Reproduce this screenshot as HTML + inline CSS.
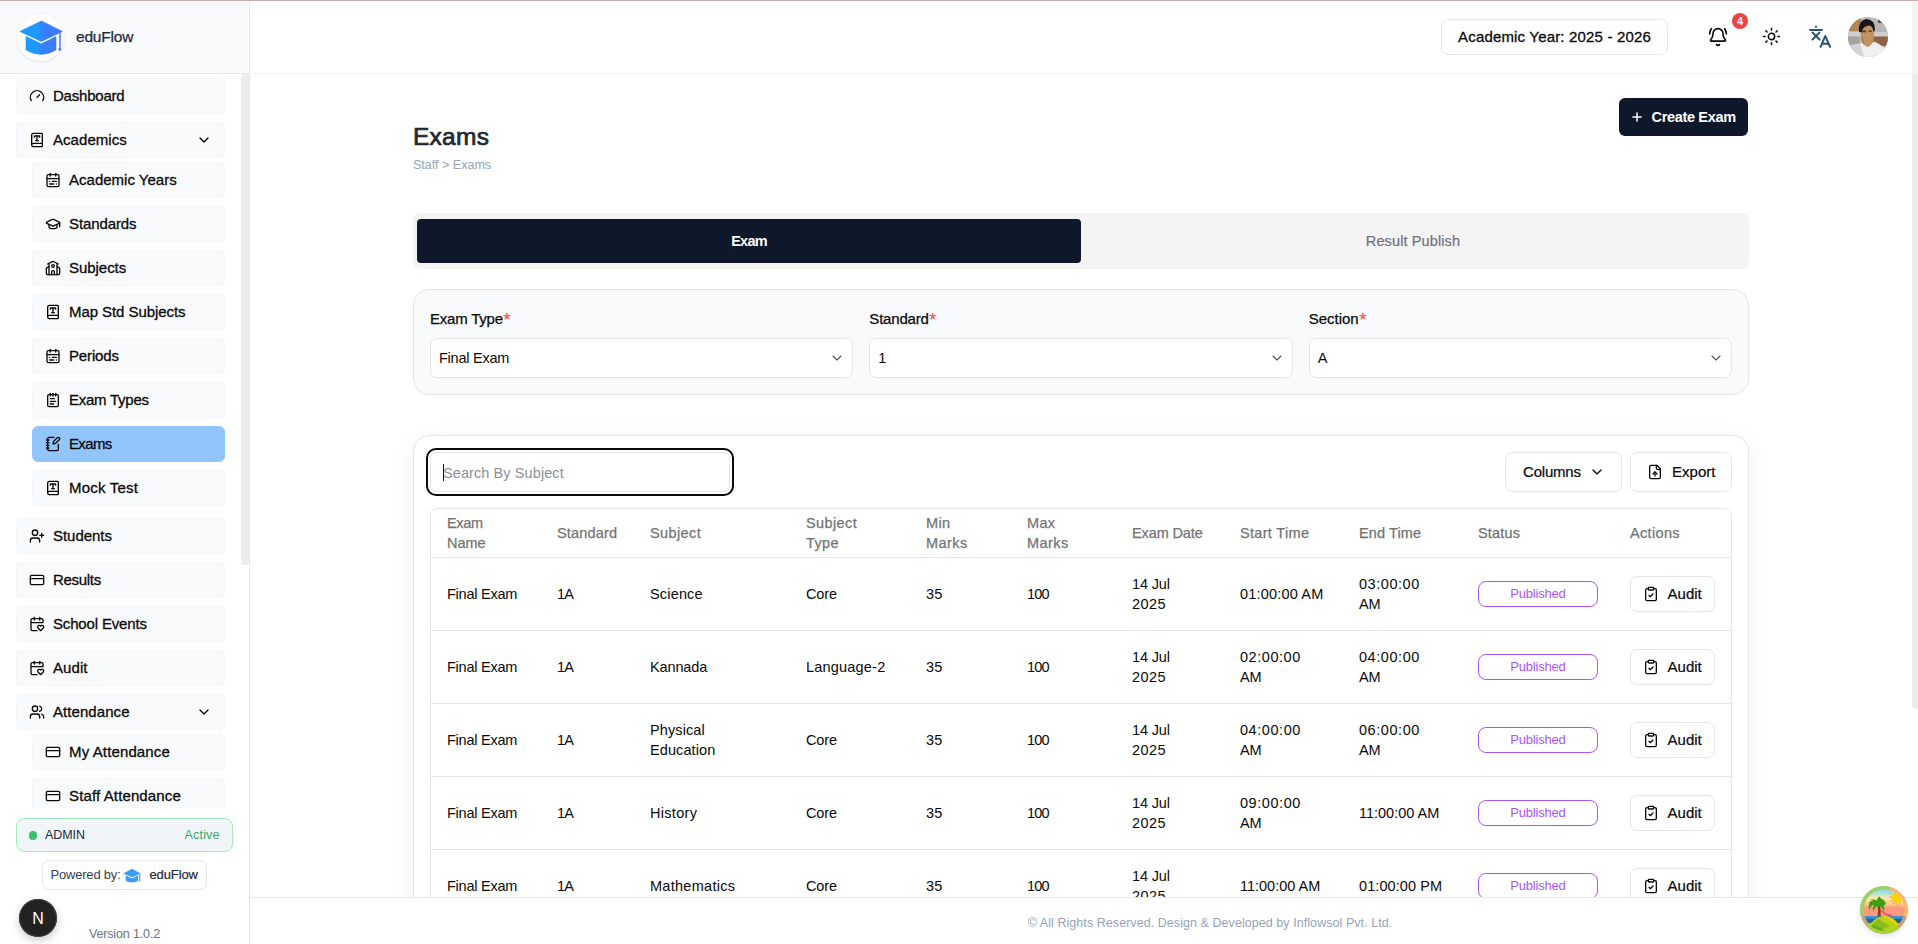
<!DOCTYPE html><html lang="en"><head><meta charset="utf-8"><title>eduFlow - Exams</title><style>
*{box-sizing:border-box;margin:0;padding:0}
button,input{font:inherit;color:inherit;border:0;background:none;text-align:left;outline:0;display:block}
a{text-decoration:none}
i{display:block}
html,body{width:1918px;height:944px;overflow:hidden;background:#fff}
body{font-family:"Liberation Sans",sans-serif;color:#0f172a;position:relative;font-size:15px}
.abs{position:absolute}
#topline{left:0;top:0;width:1918px;height:1px;background:#c6adb0;z-index:50}
#side{left:0;top:0;width:250px;height:944px;background:#fff;border-right:1px solid #e5e7eb}
#sidehead{left:0;top:0;width:249px;height:74px;background:#f8fafc;border-bottom:1px solid #e7e7e9}
#logo{left:17px;top:14px;width:46.500px;height:46.500px;border-radius:50%;background:#fff;box-shadow:0 1px 3px rgba(0,0,0,.10)}
#brand{left:76px;top:27px;font-size:15.5px;line-height:20px;color:#1e293b;-webkit-text-stroke:.25px #1e293b}
.nav{position:absolute;height:36px;border-radius:6px;background:#f8fafc;border:1px solid #f3f6f9;display:flex;align-items:center;padding-bottom:0;color:#0a0a0a;font-size:15px;-webkit-text-stroke:.3px #0a0a0a;white-space:nowrap}
.nav.l1{left:16px;width:209px;padding-left:12px}
.nav.l2{left:32px;width:193px;padding-left:12px}
.nav .ic{margin-right:8px;flex:none;-webkit-text-stroke:0}
.nav .chev{position:absolute;margin:0;right:12px;top:9px}
.nav>span{position:relative;top:-1px}
.nav.act{background:#93c5fd;border-color:#93c5fd}
#sscroll{left:241px;top:74px;width:8px;height:491px;background:#ededed;border-radius:3px}
#admin{left:16px;top:818px;width:217px;height:34px;border:1px solid #a3ecbf;border-radius:8px;background:#f1f5f8;font-size:12.5px;color:#1e293b}
#admin .dot{left:11.500px;top:12px;width:8.500px;height:8.500px;border-radius:50%;background:#3fbf6b}
#admin .t{left:28px;top:9px;line-height:15px;white-space:nowrap}
#admin .a{left:167.500px;top:9px;line-height:15px;color:#3aa863;white-space:nowrap}
#powered{left:42px;top:860px;width:165px;height:30px;border:1px solid #e5e7eb;border-radius:7px;background:#fff;font-size:13px;color:#374151}
#nextn{left:19px;top:899px;width:38px;height:38px;border-radius:50%;background:#222;box-shadow:0 0 0 1px #444 inset, 0 4px 10px rgba(0,0,0,.2);color:#fff;font-size:16px;text-align:center;line-height:40px}
#ver{left:0;top:927px;width:249px;text-align:center;font-size:12.5px;color:#6b7280;line-height:15px}
#head{left:250px;top:1px;width:1668px;height:73px;background:#fff;border-bottom:1px solid #f4f4f5}
#ay{left:1441px;top:19px;width:227px;height:36px;border:1px solid #e5e5e5;border-radius:7px;background:#fff;text-align:center;line-height:34px;font-size:15px;color:#0a0a0a;-webkit-text-stroke:.3px #0a0a0a;white-space:nowrap}
#badge{left:1732px;top:13px;width:16px;height:16px;border-radius:50%;background:#ef4444;color:#fff;font-size:11px;font-weight:bold;text-align:center;line-height:16px}
#avatar{left:1848px;top:17px;width:40px;height:40px;border-radius:50%;overflow:hidden;background:#d9d9d9}
#mscroll{left:1912px;top:74px;width:6px;height:635px;background:#ececec;border-radius:0 0 3px 3px}
#mscrolltop{left:1912px;top:1px;width:6px;height:73px;background:#f4f4f4}
h1{position:absolute;left:413px;top:121px;font-size:24.5px;line-height:32px;font-weight:normal;color:#22272e;-webkit-text-stroke:.7px #22272e;white-space:nowrap}
#crumb{left:413px;top:157px;font-size:12.5px;line-height:16px;color:#94a3b8}
#create{left:1619px;top:98px;width:129px;height:38px;border-radius:6px;background:#0f172a;color:#fff;font-size:14.5px;font-weight:bold;line-height:38px}
#tabs{left:413px;top:213px;width:1336px;height:56px;border-radius:7px;background:#f4f4f5}
#tab1{left:4px;top:6px;width:664px;height:44px;border-radius:4px;background:#0f172a;color:#fff;font-weight:bold;font-size:14.5px;text-align:center;line-height:44px}
#tab2{left:668px;top:6px;width:664px;height:44px;color:#71717a;font-size:14.5px;text-align:center;line-height:44px;-webkit-text-stroke:.2px #71717a;white-space:nowrap}
#filt{left:413px;top:289px;width:1336px;height:106px;border:1px solid #e5e5e5;border-radius:16px;background:#f9fafb}
.lbl{position:absolute;top:19px;font-size:15px;line-height:20px;color:#0a0a0a;-webkit-text-stroke:.25px #0a0a0a;white-space:nowrap}
.lbl b{color:#ef4444;font-weight:normal;-webkit-text-stroke:0;font-size:19px;line-height:10px;position:relative;top:1.500px;left:.5px}
.sel{position:absolute;top:48px;width:423.330px;height:40px;border:1px solid #e5e5e5;border-radius:7px;background:#fff;font-size:14.5px;line-height:38px;padding-left:8px;color:#0a0a0a}
.sel svg{position:absolute;right:7px;top:11px;color:#525252}
#card{left:413px;top:435px;width:1336px;height:520px;border:1px solid #e5e5e5;border-radius:16px;background:#fff;box-shadow:0 4px 24px rgba(0,0,0,.055)}
#ring{left:426px;top:448px;width:308px;height:48px;border-radius:10px;border:2px solid #0a0a0a;background:#fff}
#search{left:430px;top:452px;width:300px;height:40px;border:1px solid #e5e5e5;border-radius:7px;background:#fff;font-size:14.5px;color:#0a0a0a;padding:2px 0 0 12px}
#search::placeholder{color:#8b9099;opacity:1}
#caret{left:443px;top:464px;width:1px;height:17px;background:#111}
.btn{position:absolute;height:40px;border:1px solid #e5e5e5;border-radius:7px;background:#fff;font-size:15px;line-height:38px;color:#0a0a0a;-webkit-text-stroke:.22px #0a0a0a;white-space:nowrap}
#tbl{left:430px;top:508px;width:1302px;height:440px;border:1px solid #e5e5e5;border-radius:7px;background:#fff;overflow:hidden}
#tbl table{border-collapse:separate;border-spacing:0;table-layout:fixed;width:1300px}
#tbl th{height:48px;padding:0 16px;text-align:left;vertical-align:middle;font-weight:normal;font-size:14.5px;line-height:20px;color:#737373;-webkit-text-stroke:.25px #737373;white-space:nowrap}
#tbl td{height:73px;padding:0 16px;border-top:1px solid #e5e5e5;vertical-align:middle;font-size:14.5px;line-height:20px;color:#0a0a0a;white-space:nowrap}
.pub{display:block;width:120px;height:26px;border:1.5px solid #a855f7;border-radius:8px;color:#a855f7;font-size:13px;line-height:23px;text-align:center}
.aud{position:relative;width:85px;height:36px;border:1px solid #e5e5e5;border-radius:7px;font-size:15px;line-height:34px;color:#0a0a0a;-webkit-text-stroke:.22px #0a0a0a}
.aud svg{position:absolute;left:12px;top:9px;-webkit-text-stroke:0}
.aud>span{position:absolute;left:36.500px;top:0;white-space:nowrap}
#foot{left:250px;top:897px;width:1668px;height:47px;background:#fff;border-top:1px solid #e2e8f0;z-index:20}
#foot div{position:absolute;left:677px;top:16.500px;width:566px;text-align:center;white-space:nowrap;font-size:12.5px;line-height:16px;color:#94a3b8;letter-spacing:.1px}
#island{left:1860px;top:886px;width:48px;height:48px;border-radius:50%;z-index:30;overflow:hidden;box-shadow:0 2px 5px rgba(0,0,0,.12)}
</style></head><body>
<aside id="side" class="abs">
<nav id="navwrap" class="abs" style="left:0;top:74px;width:249px;height:735px;overflow:hidden"><div class="abs" style="left:0;top:-74px;width:249px;height:900px">
<a class="nav l1" style="top:78px"><svg class="ic" width="16" height="16" viewBox="0 0 24 24" fill="none" stroke="currentColor" stroke-width="2" stroke-linecap="round" stroke-linejoin="round" style=""><path d="m12 14 4-4"/><path d="M3.34 19a10 10 0 1 1 17.32 0"/></svg><span style="letter-spacing:-0.21px">Dashboard</span></a>
<a class="nav l1" style="top:122px"><svg class="ic" width="16" height="16" viewBox="0 0 24 24" fill="none" stroke="currentColor" stroke-width="2" stroke-linecap="round" stroke-linejoin="round" style=""><path d="M10 13h4"/><path d="M12 6v7"/><path d="M16 8V6H8v2"/><path d="M4 19.5v-15A2.5 2.5 0 0 1 6.5 2H19a1 1 0 0 1 1 1v18a1 1 0 0 1-1 1H6.5a1 1 0 0 1 0-5H20"/></svg><span style="letter-spacing:0.05px">Academics</span><svg class="ic chev" width="16" height="16" viewBox="0 0 24 24" fill="none" stroke="currentColor" stroke-width="2" stroke-linecap="round" stroke-linejoin="round" style=""><path d="m6 9 6 6 6-6"/></svg></a>
<a class="nav l2" style="top:162px"><svg class="ic" width="16" height="16" viewBox="0 0 24 24" fill="none" stroke="currentColor" stroke-width="2" stroke-linecap="round" stroke-linejoin="round" style=""><rect width="18" height="18" x="3" y="4" rx="2"/><path d="M16 2v4"/><path d="M3 10h18"/><path d="M8 2v4"/><path d="M17 14h-6"/><path d="M13 18H7"/><path d="M7 14h.01"/><path d="M17 18h.01"/></svg><span style="letter-spacing:0.01px">Academic Years</span></a>
<a class="nav l2" style="top:206px"><svg class="ic" width="16" height="16" viewBox="0 0 24 24" fill="none" stroke="currentColor" stroke-width="2" stroke-linecap="round" stroke-linejoin="round" style=""><path d="M21.42 10.922a1 1 0 0 0-.019-1.838L12.83 5.18a2 2 0 0 0-1.66 0L2.6 9.08a1 1 0 0 0 0 1.832l8.57 3.908a2 2 0 0 0 1.66 0z"/><path d="M22 10v6"/><path d="M6 12.5V16a6 3 0 0 0 12 0v-3.5"/></svg><span style="letter-spacing:-0.11px">Standards</span></a>
<a class="nav l2" style="top:250px"><svg class="ic" width="16" height="16" viewBox="0 0 24 24" fill="none" stroke="currentColor" stroke-width="2" stroke-linecap="round" stroke-linejoin="round" style=""><path d="M14 22v-4a2 2 0 1 0-4 0v4"/><path d="m18 10 3.447 1.724a1 1 0 0 1 .553.894V20a2 2 0 0 1-2 2H4a2 2 0 0 1-2-2v-7.382a1 1 0 0 1 .553-.894L6 10"/><path d="M18 5v17"/><path d="m4 6 7.106-3.553a2 2 0 0 1 1.788 0L20 6"/><path d="M6 5v17"/><circle cx="12" cy="9" r="2"/></svg><span style="letter-spacing:-0.04px">Subjects</span></a>
<a class="nav l2" style="top:294px"><svg class="ic" width="16" height="16" viewBox="0 0 24 24" fill="none" stroke="currentColor" stroke-width="2" stroke-linecap="round" stroke-linejoin="round" style=""><path d="M10 13h4"/><path d="M12 6v7"/><path d="M16 8V6H8v2"/><path d="M4 19.5v-15A2.5 2.5 0 0 1 6.5 2H19a1 1 0 0 1 1 1v18a1 1 0 0 1-1 1H6.5a1 1 0 0 1 0-5H20"/></svg><span style="letter-spacing:-0.07px">Map Std Subjects</span></a>
<a class="nav l2" style="top:338px"><svg class="ic" width="16" height="16" viewBox="0 0 24 24" fill="none" stroke="currentColor" stroke-width="2" stroke-linecap="round" stroke-linejoin="round" style=""><rect width="18" height="18" x="3" y="4" rx="2"/><path d="M16 2v4"/><path d="M3 10h18"/><path d="M8 2v4"/><path d="M17 14h-6"/><path d="M13 18H7"/><path d="M7 14h.01"/><path d="M17 18h.01"/></svg><span style="letter-spacing:-0.14px">Periods</span></a>
<a class="nav l2" style="top:382px"><svg class="ic" width="16" height="16" viewBox="0 0 24 24" fill="none" stroke="currentColor" stroke-width="2" stroke-linecap="round" stroke-linejoin="round" style=""><path d="M8 2v4"/><path d="M12 2v4"/><path d="M16 2v4"/><rect width="16" height="18" x="4" y="4" rx="2"/><path d="M8 10h6"/><path d="M8 14h8"/><path d="M8 18h5"/></svg><span style="letter-spacing:-0.25px">Exam Types</span></a>
<a class="nav l2 act" style="top:426px"><svg class="ic" width="16" height="16" viewBox="0 0 24 24" fill="none" stroke="currentColor" stroke-width="2" stroke-linecap="round" stroke-linejoin="round" style=""><path d="M13.4 2H6a2 2 0 0 0-2 2v16a2 2 0 0 0 2 2h12a2 2 0 0 0 2-2v-7.4"/><path d="M2 6h4"/><path d="M2 10h4"/><path d="M2 14h4"/><path d="M2 18h4"/><path d="M21.378 5.626a1 1 0 1 0-3.004-3.004l-5.01 5.012a2 2 0 0 0-.506.854l-.837 2.87a.5.5 0 0 0 .62.62l2.87-.837a2 2 0 0 0 .854-.506z"/></svg><span style="letter-spacing:-0.65px">Exams</span></a>
<a class="nav l2" style="top:470px"><svg class="ic" width="16" height="16" viewBox="0 0 24 24" fill="none" stroke="currentColor" stroke-width="2" stroke-linecap="round" stroke-linejoin="round" style=""><path d="M10 13h4"/><path d="M12 6v7"/><path d="M16 8V6H8v2"/><path d="M4 19.5v-15A2.5 2.5 0 0 1 6.5 2H19a1 1 0 0 1 1 1v18a1 1 0 0 1-1 1H6.5a1 1 0 0 1 0-5H20"/></svg><span style="letter-spacing:0.22px">Mock Test</span></a>
<a class="nav l1" style="top:518px"><svg class="ic" width="16" height="16" viewBox="0 0 24 24" fill="none" stroke="currentColor" stroke-width="2" stroke-linecap="round" stroke-linejoin="round" style=""><path d="M16 21v-2a4 4 0 0 0-4-4H6a4 4 0 0 0-4 4v2"/><circle cx="9" cy="7" r="4"/><line x1="19" x2="19" y1="8" y2="14"/><line x1="22" x2="16" y1="11" y2="11"/></svg><span style="letter-spacing:-0.03px">Students</span></a>
<a class="nav l1" style="top:562px"><svg class="ic" width="16" height="16" viewBox="0 0 24 24" fill="none" stroke="currentColor" stroke-width="2" stroke-linecap="round" stroke-linejoin="round" style=""><rect width="20" height="14" x="2" y="5" rx="2"/><line x1="2" x2="22" y1="10" y2="10"/></svg><span style="letter-spacing:-0.30px">Results</span></a>
<a class="nav l1" style="top:606px"><svg class="ic" width="16" height="16" viewBox="0 0 24 24" fill="none" stroke="currentColor" stroke-width="2" stroke-linecap="round" stroke-linejoin="round" style=""><path d="M3 10h18V6a2 2 0 0 0-2-2H5a2 2 0 0 0-2 2v14a2 2 0 0 0 2 2h7"/><path d="M8 2v4"/><path d="M16 2v4"/><path d="M21.29 14.7a2.43 2.43 0 0 0-2.65-.52c-.3.12-.57.3-.8.53l-.34.34-.35-.34a2.43 2.43 0 0 0-2.65-.53c-.3.12-.56.3-.79.53-.95.94-1 2.53.2 3.74L17.5 22l3.6-3.55c1.2-1.21 1.14-2.8.19-3.74Z"/></svg><span style="letter-spacing:-0.16px">School Events</span></a>
<a class="nav l1" style="top:650px"><svg class="ic" width="16" height="16" viewBox="0 0 24 24" fill="none" stroke="currentColor" stroke-width="2" stroke-linecap="round" stroke-linejoin="round" style=""><path d="M3 10h18V6a2 2 0 0 0-2-2H5a2 2 0 0 0-2 2v14a2 2 0 0 0 2 2h7"/><path d="M8 2v4"/><path d="M16 2v4"/><path d="M21.29 14.7a2.43 2.43 0 0 0-2.65-.52c-.3.12-.57.3-.8.53l-.34.34-.35-.34a2.43 2.43 0 0 0-2.65-.53c-.3.12-.56.3-.79.53-.95.94-1 2.53.2 3.74L17.5 22l3.6-3.55c1.2-1.21 1.14-2.8.19-3.74Z"/></svg><span style="letter-spacing:0.07px">Audit</span></a>
<a class="nav l1" style="top:694px"><svg class="ic" width="16" height="16" viewBox="0 0 24 24" fill="none" stroke="currentColor" stroke-width="2" stroke-linecap="round" stroke-linejoin="round" style=""><path d="M16 21v-2a4 4 0 0 0-4-4H6a4 4 0 0 0-4 4v2"/><circle cx="9" cy="7" r="4"/><path d="M22 21v-2a4 4 0 0 0-3-3.87"/><path d="M16 3.13a4 4 0 0 1 0 7.75"/></svg><span style="letter-spacing:0.07px">Attendance</span><svg class="ic chev" width="16" height="16" viewBox="0 0 24 24" fill="none" stroke="currentColor" stroke-width="2" stroke-linecap="round" stroke-linejoin="round" style=""><path d="m6 9 6 6 6-6"/></svg></a>
<a class="nav l2" style="top:734px"><svg class="ic" width="16" height="16" viewBox="0 0 24 24" fill="none" stroke="currentColor" stroke-width="2" stroke-linecap="round" stroke-linejoin="round" style=""><rect width="20" height="14" x="2" y="5" rx="2"/><line x1="2" x2="22" y1="10" y2="10"/></svg><span style="letter-spacing:0.13px">My Attendance</span></a>
<a class="nav l2" style="top:778px"><svg class="ic" width="16" height="16" viewBox="0 0 24 24" fill="none" stroke="currentColor" stroke-width="2" stroke-linecap="round" stroke-linejoin="round" style=""><rect width="20" height="14" x="2" y="5" rx="2"/><line x1="2" x2="22" y1="10" y2="10"/></svg><span style="letter-spacing:0.13px">Staff Attendance</span></a>
</div></nav>
<div id="sscroll" class="abs"></div>
<div id="sidehead" class="abs"><div id="logo" class="abs"><svg class="abs" style="left:0;top:0;overflow:visible" width="46" height="46" viewBox="0 0 46 46"><defs><linearGradient id="lg1" x1="0" y1="0" x2="1" y2="0"><stop offset="0" stop-color="#1e9bff"/><stop offset=".4" stop-color="#2196ff"/><stop offset=".6" stop-color="#3a7dff"/><stop offset="1" stop-color="#3d7aff"/></linearGradient></defs><path d="M24.400 7.100 L45.300 17.400 L24.400 27.400 L2.900 17.400 Z" fill="url(#lg1)" stroke="url(#lg1)" stroke-width=".8" stroke-linejoin="round"/><path d="M9 22.500 L24.400 29.700 L39 22.600 V36 Q24.400 44.800 9 36 Z" fill="url(#lg1)" stroke="url(#lg1)" stroke-width=".6" stroke-linejoin="round"/><path d="M43 19 V33.500" stroke="#3d7aff" stroke-width="1.500" fill="none"/><path d="M43 33 l1.500 2.200 l-2 2.300 l-1.300 -2.300z" fill="#3d7aff"/></svg></div><div id="brand" class="abs"><span style="letter-spacing:-0.20px">eduFlow</span></div></div>
<div id="admin" class="abs"><i class="dot abs"></i><div class="t abs"><span style="letter-spacing:-0.07px">ADMIN</span></div><div class="a abs"><span style="letter-spacing:0.19px">Active</span></div></div>
<div id="powered" class="abs"><span class="abs" style="left:7.500px;top:6px;line-height:15px;white-space:nowrap"><span style="letter-spacing:-0.20px">Powered by:</span></span><svg class="abs" style="left:78.500px;top:5.500px" width="19" height="17" viewBox="0 0 46 46" preserveAspectRatio="none"><path d="M24.400 5 L45.300 17.400 L24.400 28 L2.900 17.400 Z" fill="#3b9cf5"/><path d="M9 22.500 L24.400 31 L39 22.600 V38 Q24.400 46 9 38 Z" fill="#3b9cf5"/><path d="M43 19 V40" stroke="#4b8cf0" stroke-width="2.500" fill="none"/></svg><span class="abs" style="left:106.500px;top:6px;line-height:15px;color:#1e293b;-webkit-text-stroke:.2px #1e293b"><span style="letter-spacing:-0.11px">eduFlow</span></span></div>
<div id="nextn" class="abs">N</div>
<div id="ver" class="abs"><span style="letter-spacing:-0.14px">Version 1.0.2</span></div>
</aside>
<main>
<h1><span style="letter-spacing:0.25px">Exams</span></h1><div id="crumb" class="abs"><span style="letter-spacing:0.01px">Staff &gt; Exams</span></div>
<button id="create" class="abs"><svg class="abs" width="14" height="14" viewBox="0 0 24 24" fill="none" stroke="currentColor" stroke-width="2.5" stroke-linecap="round" stroke-linejoin="round" style="left:11px;top:12px;position:absolute"><path d="M5 12h14"/><path d="M12 5v14"/></svg><span class="abs" style="left:32.500px;top:0;white-space:nowrap"><span style="letter-spacing:-0.33px">Create Exam</span></span></button>
<div id="tabs" class="abs" role="tablist"><button id="tab1" class="abs" role="tab"><span style="letter-spacing:-0.80px">Exam</span></button><button id="tab2" class="abs" role="tab"><span style="letter-spacing:0.12px">Result Publish</span></button></div>
<section id="filt" class="abs">
<label class="lbl" style="left:16px"><span style="letter-spacing:-0.22px">Exam Type</span><b>*</b></label><button class="sel" role="combobox" style="left:16px"><span style="letter-spacing:-0.24px">Final Exam</span><svg class="ic" width="16" height="16" viewBox="0 0 24 24" fill="none" stroke="currentColor" stroke-width="1.6" stroke-linecap="round" stroke-linejoin="round" style=""><path d="m6 9 6 6 6-6"/></svg></button>
<label class="lbl" style="left:455.33px"><span style="letter-spacing:-0.20px">Standard</span><b>*</b></label><button class="sel" role="combobox" style="left:455.33px">1<svg class="ic" width="16" height="16" viewBox="0 0 24 24" fill="none" stroke="currentColor" stroke-width="1.6" stroke-linecap="round" stroke-linejoin="round" style=""><path d="m6 9 6 6 6-6"/></svg></button>
<label class="lbl" style="left:894.67px"><span style="letter-spacing:-0.01px">Section</span><b>*</b></label><button class="sel" role="combobox" style="left:894.67px">A<svg class="ic" width="16" height="16" viewBox="0 0 24 24" fill="none" stroke="currentColor" stroke-width="1.6" stroke-linecap="round" stroke-linejoin="round" style=""><path d="m6 9 6 6 6-6"/></svg></button>
</section>
<section id="card" class="abs"></section>
<div id="ring" class="abs"></div><input id="search" class="abs" type="text" placeholder="Search By Subject" style="letter-spacing:0.09px"><div id="caret" class="abs"></div>
<button class="btn" style="left:1505px;top:452px;width:117px"><span class="abs" style="left:17px;top:0"><span style="letter-spacing:-0.20px">Columns</span></span><svg class="abs" width="16" height="16" viewBox="0 0 24 24" fill="none" stroke="currentColor" stroke-width="2" stroke-linecap="round" stroke-linejoin="round" style="left:83px;top:11px;position:absolute"><path d="m6 9 6 6 6-6"/></svg></button>
<button class="btn" style="left:1630px;top:452px;width:102px"><svg class="abs" width="16" height="16" viewBox="0 0 24 24" fill="none" stroke="currentColor" stroke-width="2" stroke-linecap="round" stroke-linejoin="round" style="left:15.500px;top:11px;position:absolute"><path d="M15 2H6a2 2 0 0 0-2 2v16a2 2 0 0 0 2 2h12a2 2 0 0 0 2-2V7Z"/><path d="M14 2v4a2 2 0 0 0 2 2h4"/><path d="M12 12v6"/><path d="m15 15-3-3-3 3"/></svg><span class="abs" style="left:41px;top:0"><span style="letter-spacing:0.01px">Export</span></span></button>
<div id="tbl" class="abs"><table><colgroup><col style="width:110px"><col style="width:93px"><col style="width:156px"><col style="width:120px"><col style="width:101px"><col style="width:105px"><col style="width:108px"><col style="width:119px"><col style="width:119px"><col style="width:152px"><col style="width:117px"></colgroup><thead><tr>
<th><span style="letter-spacing:-0.33px">Exam</span><br><span style="letter-spacing:0.00px">Name</span></th>
<th><span style="letter-spacing:0.19px">Standard</span></th>
<th><span style="letter-spacing:0.39px">Subject</span></th>
<th><span style="letter-spacing:0.39px">Subject</span><br><span style="letter-spacing:0.35px">Type</span></th>
<th><span style="letter-spacing:0.36px">Min</span><br><span style="letter-spacing:0.43px">Marks</span></th>
<th><span style="letter-spacing:0.35px">Max</span><br><span style="letter-spacing:0.43px">Marks</span></th>
<th><span style="letter-spacing:-0.12px">Exam Date</span></th>
<th><span style="letter-spacing:0.32px">Start Time</span></th>
<th><span style="letter-spacing:0.11px">End Time</span></th>
<th><span style="letter-spacing:0.18px">Status</span></th>
<th><span style="letter-spacing:0.34px">Actions</span></th>
</tr></thead><tbody>
<tr>
<td><span style="letter-spacing:-0.24px">Final Exam</span></td>
<td><span style="letter-spacing:-0.80px">1A</span></td>
<td><span style="letter-spacing:0.17px">Science</span></td>
<td><span style="letter-spacing:-0.15px">Core</span></td>
<td><span style="letter-spacing:0.26px">35</span></td>
<td><span style="letter-spacing:-0.80px">100</span></td>
<td><span style="letter-spacing:-0.14px">14 Jul</span><br><span style="letter-spacing:0.44px">2025</span></td>
<td><span style="letter-spacing:0.18px">01:00:00 AM</span></td>
<td><span style="letter-spacing:0.54px">03:00:00</span><br><span style="letter-spacing:-0.25px">AM</span></td>
<td><span class="pub"><span style="letter-spacing:-0.20px">Published</span></span></td><td><button class="aud"><svg class="ic" width="16" height="16" viewBox="0 0 24 24" fill="none" stroke="currentColor" stroke-width="2" stroke-linecap="round" stroke-linejoin="round" style=""><rect width="8" height="4" x="8" y="2" rx="1" ry="1"/><path d="M16 4h2a2 2 0 0 1 2 2v14a2 2 0 0 1-2 2H6a2 2 0 0 1-2-2V6a2 2 0 0 1 2-2h2"/><path d="m9 14 2 2 4-4"/></svg><span><span style="letter-spacing:0.02px">Audit</span></span></button></td>
</tr>
<tr>
<td><span style="letter-spacing:-0.24px">Final Exam</span></td>
<td><span style="letter-spacing:-0.80px">1A</span></td>
<td><span style="letter-spacing:-0.13px">Kannada</span></td>
<td><span style="letter-spacing:0.20px">Language-2</span></td>
<td><span style="letter-spacing:0.26px">35</span></td>
<td><span style="letter-spacing:-0.80px">100</span></td>
<td><span style="letter-spacing:-0.14px">14 Jul</span><br><span style="letter-spacing:0.44px">2025</span></td>
<td><span style="letter-spacing:0.54px">02:00:00</span><br><span style="letter-spacing:-0.25px">AM</span></td>
<td><span style="letter-spacing:0.56px">04:00:00</span><br><span style="letter-spacing:-0.25px">AM</span></td>
<td><span class="pub"><span style="letter-spacing:-0.20px">Published</span></span></td><td><button class="aud"><svg class="ic" width="16" height="16" viewBox="0 0 24 24" fill="none" stroke="currentColor" stroke-width="2" stroke-linecap="round" stroke-linejoin="round" style=""><rect width="8" height="4" x="8" y="2" rx="1" ry="1"/><path d="M16 4h2a2 2 0 0 1 2 2v14a2 2 0 0 1-2 2H6a2 2 0 0 1-2-2V6a2 2 0 0 1 2-2h2"/><path d="m9 14 2 2 4-4"/></svg><span><span style="letter-spacing:0.02px">Audit</span></span></button></td>
</tr>
<tr>
<td><span style="letter-spacing:-0.24px">Final Exam</span></td>
<td><span style="letter-spacing:-0.80px">1A</span></td>
<td><span style="letter-spacing:0.10px">Physical</span><br><span style="letter-spacing:0.10px">Education</span></td>
<td><span style="letter-spacing:-0.15px">Core</span></td>
<td><span style="letter-spacing:0.26px">35</span></td>
<td><span style="letter-spacing:-0.80px">100</span></td>
<td><span style="letter-spacing:-0.14px">14 Jul</span><br><span style="letter-spacing:0.44px">2025</span></td>
<td><span style="letter-spacing:0.56px">04:00:00</span><br><span style="letter-spacing:-0.25px">AM</span></td>
<td><span style="letter-spacing:0.56px">06:00:00</span><br><span style="letter-spacing:-0.25px">AM</span></td>
<td><span class="pub"><span style="letter-spacing:-0.20px">Published</span></span></td><td><button class="aud"><svg class="ic" width="16" height="16" viewBox="0 0 24 24" fill="none" stroke="currentColor" stroke-width="2" stroke-linecap="round" stroke-linejoin="round" style=""><rect width="8" height="4" x="8" y="2" rx="1" ry="1"/><path d="M16 4h2a2 2 0 0 1 2 2v14a2 2 0 0 1-2 2H6a2 2 0 0 1-2-2V6a2 2 0 0 1 2-2h2"/><path d="m9 14 2 2 4-4"/></svg><span><span style="letter-spacing:0.02px">Audit</span></span></button></td>
</tr>
<tr>
<td><span style="letter-spacing:-0.24px">Final Exam</span></td>
<td><span style="letter-spacing:-0.80px">1A</span></td>
<td><span style="letter-spacing:0.31px">History</span></td>
<td><span style="letter-spacing:-0.15px">Core</span></td>
<td><span style="letter-spacing:0.26px">35</span></td>
<td><span style="letter-spacing:-0.80px">100</span></td>
<td><span style="letter-spacing:-0.14px">14 Jul</span><br><span style="letter-spacing:0.44px">2025</span></td>
<td><span style="letter-spacing:0.56px">09:00:00</span><br><span style="letter-spacing:-0.25px">AM</span></td>
<td><span style="letter-spacing:-0.01px">11:00:00 AM</span></td>
<td><span class="pub"><span style="letter-spacing:-0.20px">Published</span></span></td><td><button class="aud"><svg class="ic" width="16" height="16" viewBox="0 0 24 24" fill="none" stroke="currentColor" stroke-width="2" stroke-linecap="round" stroke-linejoin="round" style=""><rect width="8" height="4" x="8" y="2" rx="1" ry="1"/><path d="M16 4h2a2 2 0 0 1 2 2v14a2 2 0 0 1-2 2H6a2 2 0 0 1-2-2V6a2 2 0 0 1 2-2h2"/><path d="m9 14 2 2 4-4"/></svg><span><span style="letter-spacing:0.02px">Audit</span></span></button></td>
</tr>
<tr>
<td><span style="letter-spacing:-0.24px">Final Exam</span></td>
<td><span style="letter-spacing:-0.80px">1A</span></td>
<td><span style="letter-spacing:0.28px">Mathematics</span></td>
<td><span style="letter-spacing:-0.15px">Core</span></td>
<td><span style="letter-spacing:0.26px">35</span></td>
<td><span style="letter-spacing:-0.80px">100</span></td>
<td><span style="letter-spacing:-0.14px">14 Jul</span><br><span style="letter-spacing:0.44px">2025</span></td>
<td><span style="letter-spacing:-0.01px">11:00:00 AM</span></td>
<td><span style="letter-spacing:0.08px">01:00:00 PM</span></td>
<td><span class="pub"><span style="letter-spacing:-0.20px">Published</span></span></td><td><button class="aud"><svg class="ic" width="16" height="16" viewBox="0 0 24 24" fill="none" stroke="currentColor" stroke-width="2" stroke-linecap="round" stroke-linejoin="round" style=""><rect width="8" height="4" x="8" y="2" rx="1" ry="1"/><path d="M16 4h2a2 2 0 0 1 2 2v14a2 2 0 0 1-2 2H6a2 2 0 0 1-2-2V6a2 2 0 0 1 2-2h2"/><path d="m9 14 2 2 4-4"/></svg><span><span style="letter-spacing:0.02px">Audit</span></span></button></td>
</tr>
</tbody></table></div>
</main>
<header id="head" class="abs"></header>
<button id="ay" class="abs"><span style="letter-spacing:0.17px">Academic Year: 2025 - 2026</span></button>
<svg class="abs" width="20" height="20" viewBox="0 0 24 24" fill="none" stroke="currentColor" stroke-width="2" stroke-linecap="round" stroke-linejoin="round" style="left:1708px;top:27px;position:absolute;color:#0a0a0a"><path d="M10.268 21a2 2 0 0 0 3.464 0"/><path d="M22 8c0-2.3-.8-4.3-2-6"/><path d="M3.262 15.326A1 1 0 0 0 4 17h16a1 1 0 0 0 .74-1.673C19.41 13.956 18 12.499 18 8A6 6 0 0 0 6 8c0 4.499-1.411 5.956-2.738 7.326"/><path d="M4 2C2.800 3.700 2 5.700 2 8"/></svg>
<span id="badge" class="abs">4</span>
<svg class="abs" width="19" height="19" viewBox="0 0 24 24" fill="none" stroke="currentColor" stroke-width="1.9" stroke-linecap="round" stroke-linejoin="round" style="left:1762.300px;top:27.200px;position:absolute;color:#0a0a0a"><circle cx="12" cy="12" r="4"/><path d="M12 2v2"/><path d="M12 20v2"/><path d="m4.930 4.930 1.410 1.410"/><path d="m17.660 17.660 1.410 1.410"/><path d="M2 12h2"/><path d="M20 12h2"/><path d="m6.340 17.660-1.410 1.410"/><path d="m19.070 4.930-1.410 1.410"/></svg>
<svg class="abs" style="left:1808px;top:24px" width="24" height="26" viewBox="0 0 24 26" fill="none" stroke="#2a5570" stroke-width="1.900" stroke-linecap="round" stroke-linejoin="round"><path d="M2 6h12"/><path d="M8 2.500v.500"/><path d="M4.500 8.500l7 7"/><path d="M11.500 8.500l-7 7"/><path d="M12.500 23l4.800-11 4.800 11"/><path d="M14 19.800h6.600"/></svg>
<div id="avatar" class="abs"><svg width="40" height="40" viewBox="0 0 40 40"><rect width="40" height="40" fill="#bcbcbc"/><path d="M0 0H13V14.500H0Z" fill="#b0845c"/><rect x="0" y="14.500" width="40" height="5" fill="#cfcfcf"/><rect x="0" y="19.500" width="12" height="8" fill="#a9a39d"/><rect x="26" y="0" width="14" height="15" fill="#b8b8b8"/><rect x="30" y="1" width="5" height="5" fill="#5a4a40"/><rect x="24.500" y="19.500" width="15.500" height="9.500" fill="#8e6246"/><path d="M0 40 V30 Q8 27 14 26 L20 29 L26 24.500 Q34 28 37 32 V40Z" fill="#efefef"/><path d="M0 40 V29 Q6 27 12 27 L16 40Z" fill="#d4d4d4"/><path d="M13 12 Q12 24 16 28 L20 30 Q25 27 25.500 22 Q27 14 25 9 Q19 6 13 12Z" fill="#c39261"/><path d="M13 16 Q15 22 16 28 L14 24Z" fill="#8a6a4a"/><path d="M11 15 Q9.500 4 18 2 Q27 2 27 13 L25.500 15 Q25 9 21 8.500 Q15 9 13.500 15.500Z" fill="#17151a"/><rect x="14" y="13.500" width="4" height="1.800" fill="#4a3c36"/><rect x="20.500" y="13.500" width="3.500" height="1.500" fill="#5a4a40"/></svg></div>
<div id="mscrolltop" class="abs"></div><div id="mscroll" class="abs"></div>
<footer id="foot" class="abs"><div><span style="letter-spacing:0.06px">© All Rights Reserved. Design &amp; Developed by Inflowsol Pvt. Ltd.</span></div></footer>
<div id="island" class="abs"><svg width="48" height="48" viewBox="0 0 48 48"><defs><linearGradient id="sky" x1="0" y1="0" x2="0" y2="1"><stop offset="0" stop-color="#8fd4f7"/><stop offset=".14" stop-color="#a8e6dc"/><stop offset=".3" stop-color="#fbe9a8"/><stop offset=".52" stop-color="#f9c88c"/><stop offset=".62" stop-color="#fb9b7e"/><stop offset="1" stop-color="#fb9b7e"/></linearGradient><clipPath id="icl"><circle cx="24" cy="24" r="20.500"/></clipPath></defs><circle cx="24" cy="24" r="24" fill="#c7a57c"/><path d="M24 24 L0 30 A24 24 0 0 1 30 0.700 Z" fill="#9ccf6a"/><path d="M24 24 L30 0.700 A24 24 0 0 1 47 31 Z" fill="#f3b96e"/><path d="M24 24 L40 42 A24 24 0 0 1 6 40 Z" fill="#a9cf3a"/><g clip-path="url(#icl)"><rect x="0" y="3" width="48" height="30" fill="url(#sky)"/><circle cx="37" cy="11.500" r="5.500" fill="#f6d30a"/><path d="M29 7 l2 1 M29.500 11 l2 .5 M30.500 15 l2 -.5 M33 18 l1.500 -1.500 M36.500 19.500 l.5 -2 M40.500 19 l-.5 -2" stroke="#f0a94e" stroke-width="1.300" fill="none"/><rect x="0" y="30.200" width="48" height="3" fill="#2a90dc"/><rect x="0" y="33" width="48" height="4" fill="#2a5f8e"/><path d="M4 48 Q12 31 24 30 Q36 30 44 48 Z" fill="#b6d312"/><path d="M25 30 Q33 31 38 38 L36 39 Q31 33 22 30.500Z" fill="#f4d400"/><path d="M10 42 Q14 35 19 33.500 L30 40 Q22 44 12 44Z" fill="#8dba1c"/><path d="M8 44 Q10 41 13 38.500 L26 45 L14 48Z" fill="#5fa822"/><path d="M17.500 30.500 Q19 24 17.500 18.500 L19.500 18.500 Q21.500 25 20.500 30.500Z" fill="#8a3d12"/><path d="M18.500 19 Q14 12.500 9.500 16 Q8 21 9.500 24 Q11 19 14 19 Q12 22 13 26 Q15 20 18.500 20 Q22 21 24 25 Q25 22 23.500 19.500 Q25.500 19 26 17.500 Q24 13 20 12 Q21 10.500 19.500 10.500 Q17 12 16.500 14.500 Q13 12.500 10.500 13.500 Q15 14.500 18.500 19Z" fill="#3f9d14"/><path d="M21.500 24.500 L26 28.500 L31 29.500 L31.500 31" stroke="#e8457a" stroke-width="1.500" fill="none"/></g></svg></div>
<div id="topline" class="abs"></div>
</body></html>
